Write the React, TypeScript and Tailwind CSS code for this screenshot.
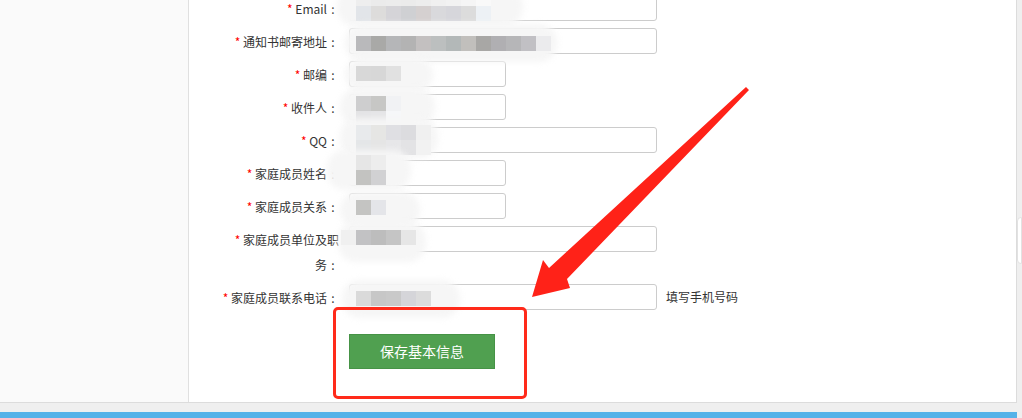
type Row = { label: string; wide: boolean; hint?: string };

const rows: Row[] = [
  { label: "Email", wide: true },
  { label: "通知书邮寄地址", wide: true },
  { label: "邮编", wide: false },
  { label: "收件人", wide: false },
  { label: "QQ", wide: true },
  { label: "家庭成员姓名", wide: false },
  { label: "家庭成员关系", wide: false },
  { label: "家庭成员单位及职务", wide: true },
  { label: "家庭成员联系电话", wide: true, hint: "填写手机号码" },
];

// mosaic redaction patches, page coords
type Patch = { halo: [number, number, number, number]; cells: [number, number, string][] };

const strip = (x: number, y: number, colors: string[]): [number, number, string][] =>
  colors.map((c, i) => [x + i * 15, y, c]);

const patches: Patch[] = [
  {
    halo: [337, -12, 186, 38],
    cells: [
      ...strip(356, -9, ["#eeeeee", "#ebebeb", "#ececec", "#ebebeb", "#ededed", "#f0f0f0", "#f2f2f2", "#f5f5f5", "#f9f9f9"]),
      ...strip(356, 6, ["#e2e5e9", "#dddcdb", "#d5d4d8", "#cfd0d3", "#d5d0d0", "#d9d9dc", "#d6d6db", "#dcdcdc", "#edf1f5"]),
    ],
  },
  {
    halo: [345, 24, 212, 38],
    cells: strip(356, 36, ["#b9b9bb", "#a9a9a7", "#b5b6b8", "#b3b3b3", "#c3c0c0", "#bcbfbf", "#b3b8b8", "#c1bfbc", "#a8a7a5", "#b0afb2", "#b6b6b8", "#c1c0c4", "#ebebed"]),
  },
  {
    halo: [345, 58, 88, 34],
    cells: strip(356, 66, ["#d8d8d8", "#d7d7d7", "#e1e1e1"]),
  },
  {
    halo: [340, 88, 95, 38],
    cells: [
      ...strip(356, 96, ["#cececf", "#c7c7c5", "#f1f2f4"]),
      ...strip(356, 111, ["#e3e3e5", "#e4e4e6", "#f6f7f9"]),
    ],
  },
  {
    halo: [340, 118, 98, 40],
    cells: [
      ...strip(356, 125, ["#e8eaec", "#e6e6e4", "#dfdfe3", "#dcdcdf", "#f0f0f0"]),
      ...strip(356, 140, ["#e4e6e8", "#e5e5e5", "#e7e7e9", "#e3e3e5", "#f2f2f2"]),
    ],
  },
  {
    halo: [327, 150, 84, 40],
    cells: [
      ...strip(356, 155, ["#e6e6e6", "#ededed"]),
      ...strip(356, 170, ["#c3c3c1", "#d1d1d3"]),
    ],
  },
  {
    halo: [340, 192, 80, 36],
    cells: strip(356, 200, ["#c4c4c2", "#e4e5e9"]),
  },
  {
    halo: [338, 222, 88, 40],
    cells: strip(341, 230, ["#f0f0f0", "#c2c2c4", "#bdbdbd", "#c5c5c5", "#e6e6e6"]),
  },
  {
    halo: [342, 280, 118, 38],
    cells: strip(356, 291, ["#dadada", "#c7c7c7", "#c9c9c9", "#d5d5d9", "#dcdcdc"]),
  },
];

function FormRow({ row }: { row: Row }) {
  const head = row.label.slice(0, -1);
  const last = row.label.slice(-1);
  return (
    <div className="flex items-start mb-[7px]">
      <div className="ml-[26px] w-[124px] text-right text-[12px] leading-[25px] text-[#333] pt-px">
        <span className="text-[#f00]">*</span> {head}
        <span className="whitespace-nowrap">
          {last}
          <span className="inline-block w-[12px] text-center">:</span>
        </span>
      </div>
      <div
        className={`ml-[10px] h-[26px] bg-white border border-[#ccc] rounded-[3px] ${
          row.wide ? "w-[308px]" : "w-[157px]"
        }`}
      />
      {row.hint && (
        <div className="ml-[9px] text-[12px] leading-[26px] text-[#333]">{row.hint}</div>
      )}
    </div>
  );
}

export default function App() {
  return (
    <div
      className="relative w-[1022px] h-[418px] overflow-hidden bg-[#efefef]"
      style={{ fontFamily: '"Noto Sans CJK SC", "Noto Sans", sans-serif' }}
    >
      <div className="flex h-[403px]">
        <div className="flex w-[1017px] h-[403px] bg-white border-r border-b border-[#dcdcdc]">
          <aside className="w-[189px] h-full bg-[#fafafa] border-r border-[#e0e0e0]" />
          <main className="flex-1 overflow-hidden">
            <div className="mt-[-5px]">
              {rows.map((r) => (
                <FormRow key={r.label} row={r} />
              ))}
              <div className="ml-[160px] mt-[24px]">
                <button className="w-[146px] h-[35px] bg-[#50a050] border border-[#469346] text-white text-[14px]">
                  保存基本信息
                </button>
              </div>
            </div>
          </main>
        </div>
        <div className="flex-1 pt-[217px]">
          <div className="h-[47px] bg-white border border-[#e2e2e2] rounded-l-[4px]" />
        </div>
      </div>
      <div className="mt-[9px] w-[1017px] h-[6px] bg-[#55b2e8]" />

      {/* redaction overlay */}
      <div className="absolute inset-0 pointer-events-none">
        {patches.map((p, i) => (
          <div key={i}>
            <div
              className="absolute bg-[#f6f6f6] rounded-[18px] blur-[3px]"
              style={{ left: p.halo[0], top: p.halo[1], width: p.halo[2], height: p.halo[3] }}
            />
            {p.cells.map(([x, y, c], j) => (
              <div
                key={j}
                className="absolute w-[15px] h-[15px] blur-[0.6px]"
                style={{ left: x, top: y, background: c }}
              />
            ))}
          </div>
        ))}
      </div>

      {/* annotation */}
      <div className="absolute left-[333px] top-[307px] w-[194px] h-[92px] border-[3px] border-[#ff2a1a] rounded-[5px]" />
      <svg className="absolute inset-0" width="1022" height="418" viewBox="0 0 1022 418">
        <polygon
          points="746,87 749,90 567,279 570,288 532,297 543,260 549,268"
          fill="#ff2218"
        />
      </svg>
    </div>
  );
}
